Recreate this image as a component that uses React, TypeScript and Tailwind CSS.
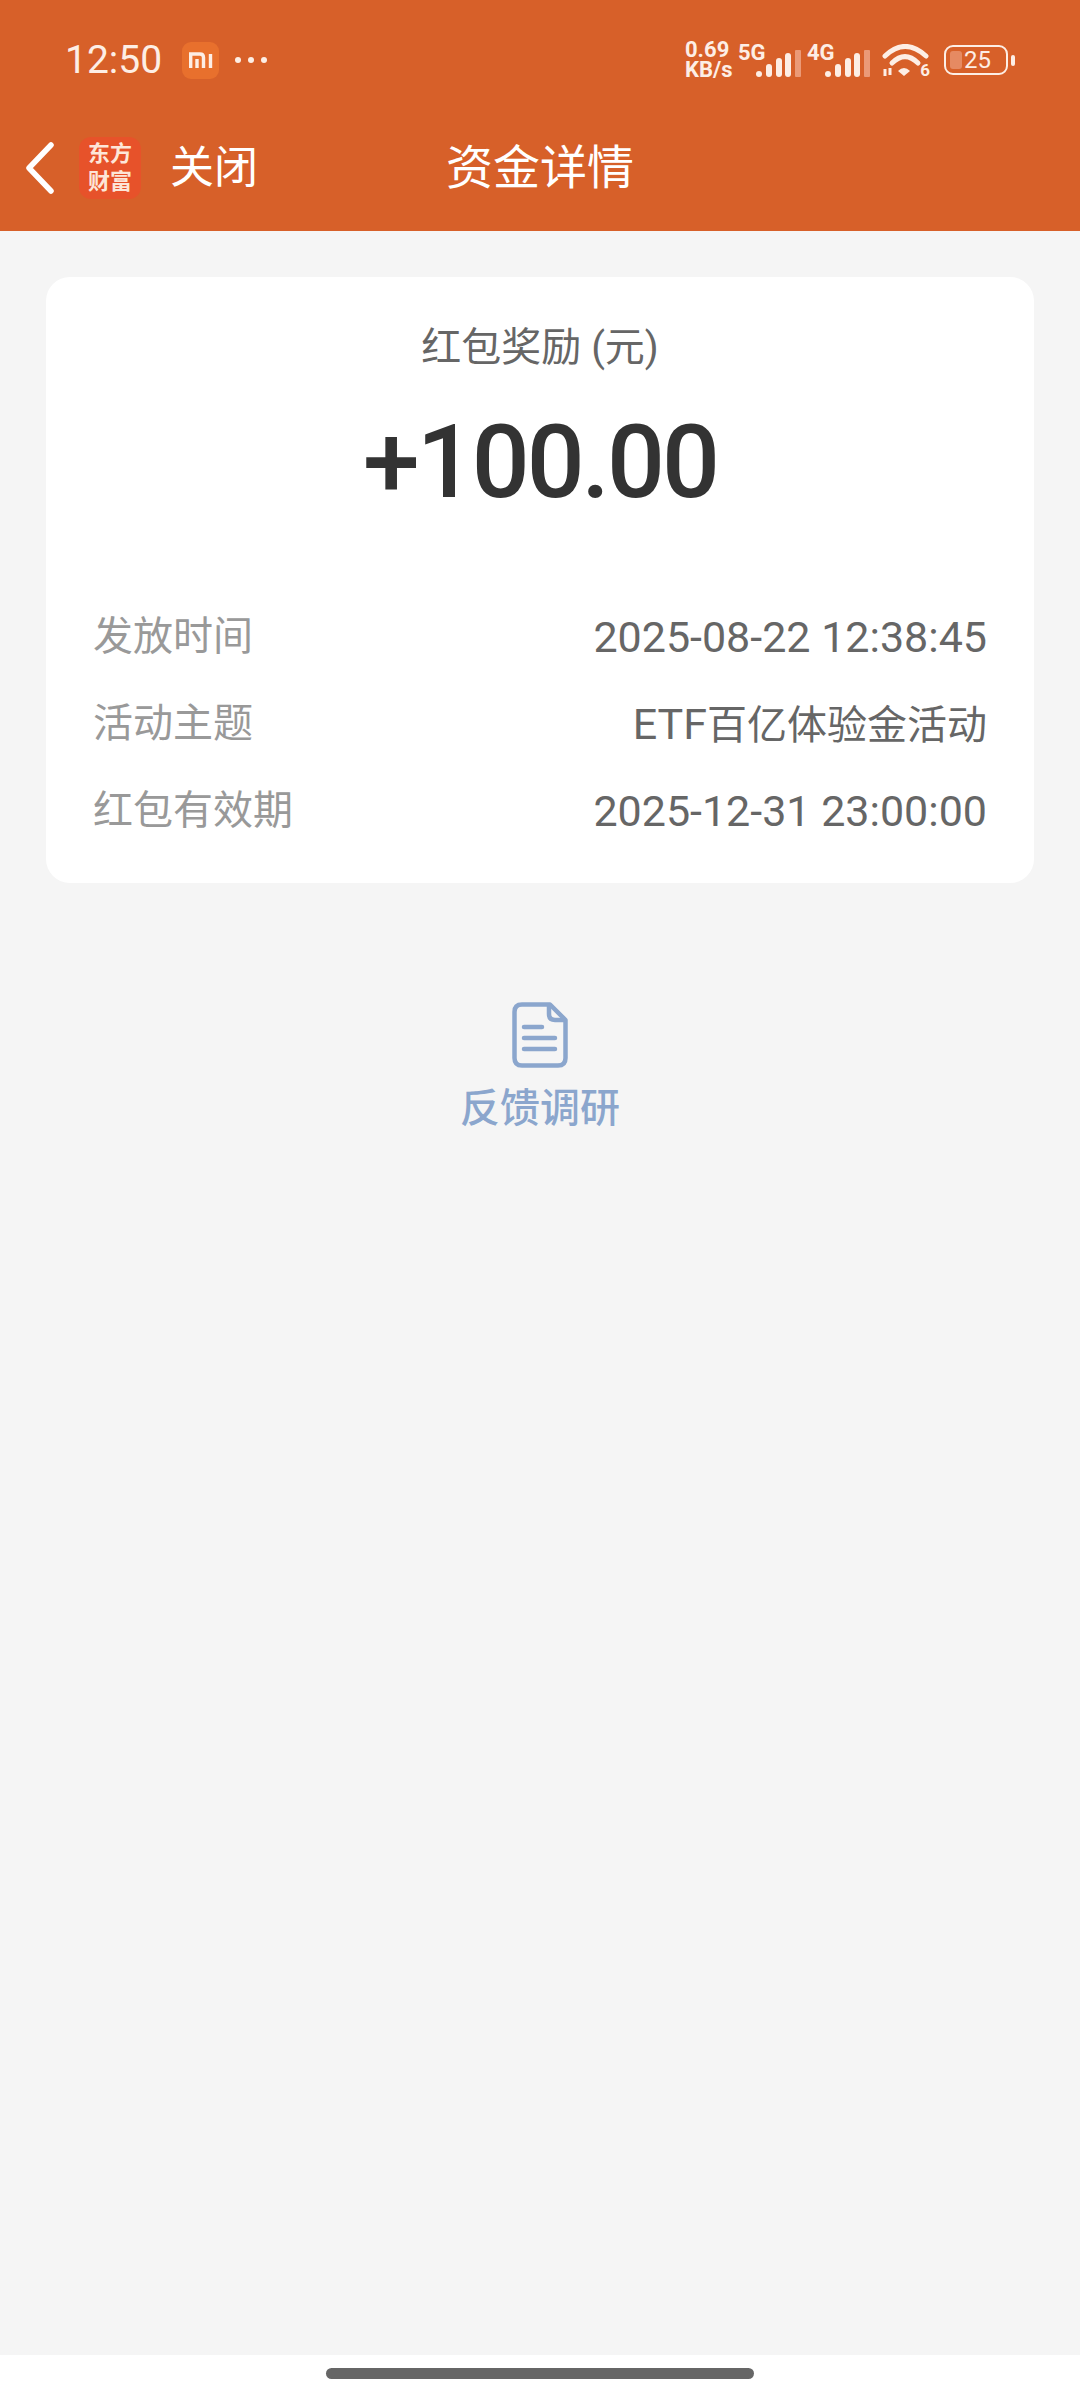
const cjk = "font-['Roboto','Noto_Sans_CJK_SC',sans-serif]";

const rows = [
  { label: "发放时间", latin: "2025-08-22 12:38:45", rest: "" },
  { label: "活动主题", latin: "ETF", rest: "百亿体验金活动" },
  { label: "红包有效期", latin: "2025-12-31 23:00:00", rest: "" },
];

function SignalBars() {
  return (
    <svg width="45" height="28" viewBox="0 0 45 28" className="mt-[4px]">
      <rect x="0" y="21" width="6" height="6" rx="3" fill="#fdeee5" />
      <rect x="10" y="14" width="6" height="13" rx="3" fill="#fdeee5" />
      <rect x="20" y="8" width="6" height="19" rx="3" fill="#fdeee5" />
      <rect x="29" y="3" width="6" height="24" rx="3" fill="#fdeee5" />
      <rect x="39" y="0" width="6" height="27" rx="1" fill="#eb9a77" />
    </svg>
  );
}

function Wifi() {
  return (
    <div className="relative h-[33px] w-[48px]">
      <svg width="48" height="33" viewBox="0 0 48 33">
        <path d="M3 12 Q23 -7 44 12" fill="none" stroke="#fdeee5" strokeWidth="5" strokeLinecap="round" />
        <path d="M10 19 Q23 6 36 19" fill="none" stroke="#fdeee5" strokeWidth="5" strokeLinecap="round" />
        <path d="M16 27 Q22 21 28 27 L22 32 Z" fill="#fdeee5" />
        <path d="M3 25 V32 M8 24 V31" stroke="#fdeee5" strokeWidth="3" />
      </svg>
      <span className="absolute right-0 bottom-0 text-[17px] font-bold leading-[14px] text-[#fdeee5]">6</span>
    </div>
  );
}

function Battery() {
  return (
    <div className="flex items-center gap-[3px]">
      <div className="flex h-[30px] w-[64px] items-center rounded-[9px] border-2 border-[#fdeee5] p-[4px]">
        <div className="h-full w-[12px] shrink-0 rounded-[3px] bg-[#e68a62]" />
        <span className="ml-[2px] font-['Roboto',sans-serif] text-[24px] font-normal leading-none text-[#fdeee5]">25</span>
      </div>
      <div className="h-[11px] w-[4px] rounded-full bg-[#fdeee5]" />
    </div>
  );
}

function StatusBar() {
  return (
    <div className="flex h-[104px] items-center justify-between pt-[16px] pl-[65px] pr-[65px]">
      <div className="flex items-center">
        <span className="font-['Roboto',sans-serif] text-[39px] leading-none text-[#fdeee5]">12:50</span>
        <div className="ml-[20px] flex h-[37px] w-[37px] items-center justify-center rounded-[9px] bg-[#e8702d]">
          <svg width="24" height="16" viewBox="0 0 24 16">
            <path d="M1.7 16 V2 H11 Q14.5 2 14.5 5.5 V16 M8 7 V16 M21.5 2 V16" fill="none" stroke="#fdeee5" strokeWidth="3.4" />
          </svg>
        </div>
        <div className="ml-[16px] flex gap-[7px]">
          <div className="h-[6px] w-[6px] rounded-full bg-[#fdeee5]" />
          <div className="h-[6px] w-[6px] rounded-full bg-[#fdeee5]" />
          <div className="h-[6px] w-[6px] rounded-full bg-[#fdeee5]" />
        </div>
      </div>
      <div className="flex items-center font-['Roboto',sans-serif] font-bold text-[#fdeee5]">
        <div className="flex w-[50px] flex-col items-start whitespace-nowrap text-[22px] leading-[20px]">
          <span>0.69</span>
          <span>KB/s</span>
        </div>
        <div className="ml-[3px] flex items-end">
          <span className="mb-[14px] w-[28px] shrink-0 text-[22px] leading-none">5G</span>
          <div className="-ml-[10px]">
            <SignalBars />
          </div>
        </div>
        <div className="ml-[6px] flex items-end">
          <span className="mb-[14px] w-[28px] shrink-0 text-[22px] leading-none">4G</span>
          <div className="-ml-[10px]">
            <SignalBars />
          </div>
        </div>
        <div className="ml-[12px]">
          <Wifi />
        </div>
        <div className="ml-[14px]">
          <Battery />
        </div>
      </div>
    </div>
  );
}

function NavBar() {
  return (
    <div className="grid h-[127px] grid-cols-[1fr_auto_1fr] items-center">
      <div className="flex items-center pl-[24px]">
        <svg width="30" height="52" viewBox="0 0 30 52">
          <path d="M27 3 L5 26 L27 49" fill="none" stroke="#ffffff" strokeWidth="5.5" strokeLinecap="round" strokeLinejoin="round" />
        </svg>
        <div className="ml-[25px] flex h-[62px] w-[62px] flex-col items-center justify-center rounded-[12px] bg-[#e7522a] text-[22px] font-bold leading-[28px] text-[#fde6d8]">
          <span className={cjk}>东方</span>
          <span className={cjk}>财富</span>
        </div>
        <span className={`${cjk} ml-[29px] text-[44px] leading-none text-white`}>关闭</span>
      </div>
      <span className={`${cjk} text-[47px] leading-none text-white`}>资金详情</span>
      <div />
    </div>
  );
}

export default function App() {
  return (
    <div className={`${cjk} flex min-h-[2400px] flex-col bg-white`}>
      <header className="bg-[#d76029]">
        <StatusBar />
        <NavBar />
      </header>

      <main className="flex-1 bg-[#f5f5f5] px-[46px] pt-[46px]">
        <section className="rounded-[24px] bg-white px-[47px] pt-[46px] pb-[47px]">
          <p className="text-center text-[40px] leading-[50px] text-[#666666]">红包奖励 (元)</p>
          <p className="mt-[34px] text-center text-[102px] font-medium leading-[110px] tracking-[-3px] text-[#333333]">+100.00</p>
          <div className="mt-[95px] flex flex-col gap-[37px]">
            {rows.map((row) => (
              <div key={row.label} className="flex h-[50px] items-center justify-between text-[40px] leading-none">
                <span className="text-[#999999]">{row.label}</span>
                <span className="text-[#666666]">
                  <span className="text-[43px] leading-none">{row.latin}</span>
                  {row.rest}
                </span>
              </div>
            ))}
          </div>
        </section>

        <div className="mt-[119px] flex flex-col items-center">
          <svg width="56" height="66" viewBox="0 0 56 66">
            <path
              d="M10 2.5 H38 L53.5 18 V56 Q53.5 63.5 46 63.5 H10 Q2.5 63.5 2.5 56 V10 Q2.5 2.5 10 2.5 Z"
              fill="none"
              stroke="#8ba6cd"
              strokeWidth="4.5"
              strokeLinejoin="round"
            />
            <path d="M37 3 V12 Q37 18 43 18 H53" fill="none" stroke="#8ba6cd" strokeWidth="4.5" />
            <path d="M12 25 H30 M12 36 H43 M12 47 H43" stroke="#8ba6cd" strokeWidth="4.5" strokeLinecap="round" />
          </svg>
          <span className="mt-[16px] text-[40px] font-medium leading-[50px] text-[#8ba6cd]">反馈调研</span>
        </div>
      </main>

      <footer className="flex h-[45px] justify-center pt-[13px]">
        <div className="h-[11px] w-[428px] rounded-full bg-[#666666]" />
      </footer>
    </div>
  );
}
